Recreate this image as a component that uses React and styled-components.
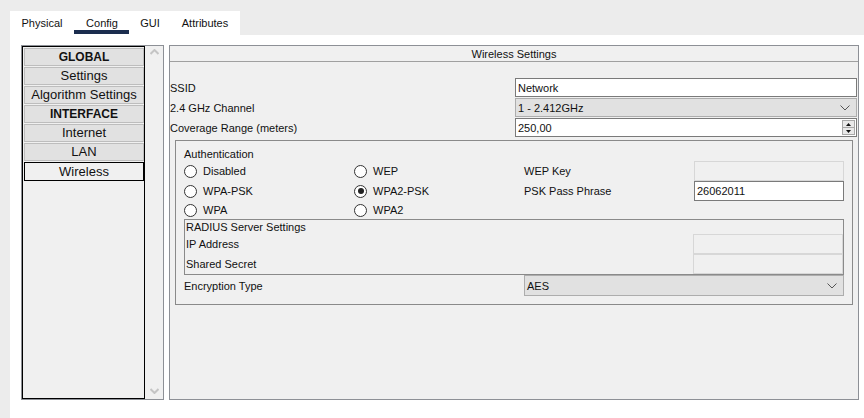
import React from 'react';
import styled, { createGlobalStyle, css } from 'styled-components';

const Global = createGlobalStyle`
  html, body { margin: 0; padding: 0; background: #ececec; }
  body {
    font-family: "Liberation Sans", Arial, sans-serif;
    font-size: 11px;
    color: #000;
    overflow: hidden;
  }
  * { box-sizing: border-box; }
`;

const Page = styled.div`
  height: 418px;
  padding: 11px 0 0 10px;
  display: flex;
  flex-direction: column;
`;

const TabBar = styled.div`
  width: 230px;
  height: 24px;
  background: #fff;
  display: flex;
`;

const Tab = styled.div`
  position: relative;
  width: ${p => p.$w}px;
  display: flex;
  align-items: center;
  justify-content: center;
  padding-bottom: 1px;
  color: #111;
  ${p => p.$active && css`
    &::after {
      content: "";
      position: absolute;
      left: 0;
      right: 1px;
      bottom: 1px;
      height: 4px;
      background: #1b2d4e;
    }
  `}
`;

const Body = styled.div`
  flex: 1;
  background: #fff;
  display: flex;
  gap: 5px;
  padding: 10px 0 0 11px;
`;

const Sidebar = styled.div`
  width: 143px;
  height: 355px;
  border: 1px solid #8d9096;
  display: flex;
`;

const ListBox = styled.div`
  width: 123px;
  border: 1px solid #000;
  background: #f0f0f0;
  padding: 1px 0 0 1px;
  display: flex;
  flex-direction: column;
  gap: 1px;
`;

const ListItem = styled.div`
  width: 120px;
  height: 18px;
  background: ${p => (p.$selected ? '#f0f0f0' : '#e1e1e1')};
  border: 1px solid ${p => (p.$selected ? '#000' : '#bdbdbd')};
  display: flex;
  align-items: center;
  justify-content: center;
  font-size: ${p => (p.$bold ? '12px' : '13px')};
  font-weight: ${p => (p.$bold ? 700 : 400)};
  color: #111;
  line-height: 16px;
  ${p => p.$selected && css`height: 19px;`}
`;

const ScrollTrack = styled.div`
  flex: 1;
  background: #f0f0f0;
  display: flex;
  flex-direction: column;
  justify-content: space-between;
  align-items: center;
  padding: 3px 0 5px;
`;

const Panel = styled.div`
  width: 690px;
  height: 355px;
  border: 1px solid #8d9096;
  background: #f0f0f0;
  display: flex;
  flex-direction: column;
`;

const PanelHeader = styled.div`
  height: 16px;
  border-bottom: 1px solid #a0a0a0;
  display: flex;
  align-items: center;
  justify-content: center;
  color: #111;
`;

const FormGrid = styled.div`
  margin-top: 16px;
  display: grid;
  grid-template-columns: 345px 342px;
  grid-auto-rows: 19px;
  row-gap: 1px;
`;

const FieldLabel = styled.div`
  display: flex;
  align-items: center;
  white-space: nowrap;
  color: #111;
`;

const Field = styled.div`
  position: relative;
  display: flex;
  align-items: center;
  padding-left: 2px;
  color: #111;
  height: ${p => p.$h || 19}px;
  ${p => p.$kind === 'text' && css`
    background: #fff;
    border: 1px solid #7a7a7a;
  `}
  ${p => p.$kind === 'select' && css`
    background: #e1e1e1;
    border: 1px solid #adadad;
  `}
  ${p => p.$kind === 'disabled' && css`
    background: #f0f0f0;
    border: 1px solid #d7d7d7;
  `}
`;

const Chevron = styled.svg`
  position: absolute;
  right: 6px;
  top: 50%;
  margin-top: -3px;
`;

const Spinner = styled.div`
  position: absolute;
  right: 1px;
  top: 1px;
  bottom: 1px;
  width: 13px;
  border: 1px solid #a8a8a8;
  background: #e9e9e9;
  display: flex;
  flex-direction: column;
`;

const SpinHalf = styled.div`
  flex: 1;
  display: flex;
  align-items: center;
  justify-content: center;
  & + & { border-top: 1px solid #a8a8a8; }
`;

const AuthGroup = styled.div`
  margin: 3px 5px 0 5px;
  height: 165px;
  border: 1px solid #8a8a8a;
  padding: 6px 0 0 8px;
`;

const AuthGrid = styled.div`
  display: grid;
  grid-template-columns: 170px 170px 170px 150px;
  grid-template-rows: 14px 20px 20px 18px 56px 21px;
`;

const GroupTitle = styled.div`
  grid-column: 1 / -1;
  display: flex;
  align-items: center;
  color: #111;
`;

const RadioOption = styled.label`
  display: flex;
  align-items: center;
  gap: 6px;
  color: #111;
`;

const RadioCircle = styled.span`
  width: 13px;
  height: 13px;
  border-radius: 50%;
  border: 1px solid #333;
  background: #fff;
  display: flex;
  align-items: center;
  justify-content: center;
  &::after {
    content: "";
    width: 6px;
    height: 6px;
    border-radius: 50%;
    background: ${p => (p.$checked ? '#222' : 'transparent')};
  }
`;

const RadiusGroup = styled.div`
  grid-column: 1 / -1;
  border: 1px solid #8a8a8a;
  display: grid;
  grid-template-columns: 1fr 150px;
  grid-template-rows: 14px 20px 20px;
  padding-left: 1px;
`;

const RadiusCell = styled.div`
  display: flex;
  align-items: center;
  color: #111;
  white-space: nowrap;
  ${p => p.$span && css`grid-column: 1 / -1;`}
`;

const Spacer = styled.div``;

const EncLabel = styled.div`
  grid-column: 1 / 3;
  display: flex;
  align-items: center;
  color: #111;
`;

const EncSelectCell = styled.div`
  grid-column: 3 / 5;
`;

const Down = () => (
  <Chevron width="10" height="6" viewBox="0 0 10 6">
    <polyline points="0.5,0.5 5,5 9.5,0.5" fill="none" stroke="#555" strokeWidth="1" />
  </Chevron>
);

const ScrollArrow = ({ up }) => (
  <svg width="9" height="6" viewBox="0 0 9 6">
    <polyline
      points={up ? '0.5,5 4.5,1 8.5,5' : '0.5,1 4.5,5 8.5,1'}
      fill="none"
      stroke="#c4c4c4"
      strokeWidth="2"
    />
  </svg>
);

const Radio = ({ label, checked }) => (
  <RadioOption>
    <RadioCircle $checked={checked} />
    {label}
  </RadioOption>
);

const menu = [
  { t: 'GLOBAL', bold: true },
  { t: 'Settings' },
  { t: 'Algorithm Settings' },
  { t: 'INTERFACE', bold: true },
  { t: 'Internet' },
  { t: 'LAN' },
  { t: 'Wireless', selected: true },
];

export default function App() {
  return (
    <>
      <Global />
      <Page>
        <TabBar>
          <Tab $w={64}>Physical</Tab>
          <Tab $w={56} $active>Config</Tab>
          <Tab $w={40}>GUI</Tab>
          <Tab $w={70}>Attributes</Tab>
        </TabBar>
        <Body>
          <Sidebar>
            <ListBox>
              {menu.map(m => (
                <ListItem key={m.t} $bold={m.bold} $selected={m.selected}>
                  {m.t}
                </ListItem>
              ))}
            </ListBox>
            <ScrollTrack>
              <ScrollArrow up />
              <ScrollArrow />
            </ScrollTrack>
          </Sidebar>
          <Panel>
            <PanelHeader>Wireless Settings</PanelHeader>
            <FormGrid>
              <FieldLabel>SSID</FieldLabel>
              <Field $kind="text">Network</Field>
              <FieldLabel>2.4 GHz Channel</FieldLabel>
              <Field $kind="select">
                1 - 2.412GHz
                <Down />
              </Field>
              <FieldLabel>Coverage Range (meters)</FieldLabel>
              <Field $kind="text">
                250,00
                <Spinner>
                  <SpinHalf>
                    <svg width="5" height="3" viewBox="0 0 5 3"><polygon points="2.5,0 5,3 0,3" fill="#111" /></svg>
                  </SpinHalf>
                  <SpinHalf>
                    <svg width="5" height="3" viewBox="0 0 5 3"><polygon points="0,0 5,0 2.5,3" fill="#111" /></svg>
                  </SpinHalf>
                </Spinner>
              </Field>
            </FormGrid>
            <AuthGroup>
              <AuthGrid>
                <GroupTitle>Authentication</GroupTitle>
                <Radio label="Disabled" />
                <Radio label="WEP" />
                <FieldLabel>WEP Key</FieldLabel>
                <Field $kind="disabled" $h={20} />
                <Radio label="WPA-PSK" />
                <Radio label="WPA2-PSK" checked />
                <FieldLabel>PSK Pass Phrase</FieldLabel>
                <Field $kind="text" $h={20}>26062011</Field>
                <Radio label="WPA" />
                <Radio label="WPA2" />
                <Spacer />
                <Spacer />
                <RadiusGroup>
                  <RadiusCell $span>RADIUS Server Settings</RadiusCell>
                  <RadiusCell>IP Address</RadiusCell>
                  <Field $kind="disabled" $h={20} />
                  <RadiusCell>Shared Secret</RadiusCell>
                  <Field $kind="disabled" $h={20} />
                </RadiusGroup>
                <EncLabel>Encryption Type</EncLabel>
                <EncSelectCell>
                  <Field $kind="select" $h={21}>
                    AES
                    <Down />
                  </Field>
                </EncSelectCell>
              </AuthGrid>
            </AuthGroup>
          </Panel>
        </Body>
      </Page>
    </>
  );
}
